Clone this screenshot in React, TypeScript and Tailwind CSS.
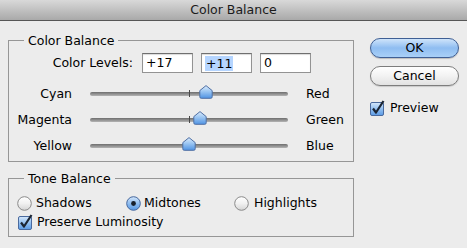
import React from 'react';

const font = { fontFamily: '"DejaVu Sans", "Liberation Sans", sans-serif' };

const sliders = [
  { left: 'Cyan', right: 'Red', value: 17 },
  { left: 'Magenta', right: 'Green', value: 11 },
  { left: 'Yellow', right: 'Blue', value: 0 },
];

const Thumb = () => (
  <svg width="14" height="14" viewBox="0 0 14 14">
    <defs>
      <linearGradient id="thumbFill" x1="0" y1="0" x2="0" y2="1">
        <stop offset="0" stopColor="#dcebfb" />
        <stop offset="0.45" stopColor="#9cc6f2" />
        <stop offset="1" stopColor="#4f93e3" />
      </linearGradient>
    </defs>
    <path
      d="M7 0.6 L13.2 5.6 L13.2 11.8 Q13.2 13.3 11.8 13.3 L2.2 13.3 Q0.8 13.3 0.8 11.8 L0.8 5.6 Z"
      fill="url(#thumbFill)"
      stroke="#4f6fa3"
      strokeWidth="1"
    />
  </svg>
);

const Radio = ({ checked }: { checked?: boolean }) => (
  <svg width="15" height="15" viewBox="0 0 15 15">
    <defs>
      <linearGradient id="radioOff" x1="0" y1="0" x2="0" y2="1">
        <stop offset="0" stopColor="#ffffff" />
        <stop offset="0.5" stopColor="#f1f1f1" />
        <stop offset="1" stopColor="#d4d4d4" />
      </linearGradient>
      <linearGradient id="radioOn" x1="0" y1="0" x2="0" y2="1">
        <stop offset="0" stopColor="#d4e6fa" />
        <stop offset="0.5" stopColor="#8fbdf0" />
        <stop offset="1" stopColor="#5597e4" />
      </linearGradient>
    </defs>
    <circle
      cx="7.5"
      cy="7.5"
      r="6.8"
      fill={checked ? 'url(#radioOn)' : 'url(#radioOff)'}
      stroke={checked ? '#45679d' : '#8a8a8a'}
      strokeWidth="1"
    />
    {checked && <circle cx="7.5" cy="7.5" r="2.4" fill="#17202c" />}
  </svg>
);

const Check = () => (
  <svg width="15" height="15" viewBox="0 0 15 15" className="overflow-visible">
    <defs>
      <linearGradient id="checkFill" x1="0" y1="0" x2="0" y2="1">
        <stop offset="0" stopColor="#d6e8fb" />
        <stop offset="0.5" stopColor="#93c0f1" />
        <stop offset="1" stopColor="#5a9ae5" />
      </linearGradient>
    </defs>
    <rect x="0.5" y="1.5" width="13" height="13" rx="1.5" fill="url(#checkFill)" stroke="#4a6a9e" />
    <path d="M3 7.5 L6 11.5 L13.5 0" fill="none" stroke="#1b2534" strokeWidth="2.2" strokeLinejoin="round" />
  </svg>
);

const LevelInput = ({ value, selected }: { value: string; selected?: boolean }) => (
  <div className="w-[51px] h-[20px] bg-white border border-[#939393] border-t-[#6f6f6f] shadow-[inset_0_1px_1px_rgba(0,0,0,0.15)] flex items-center pl-[3px] text-black">
    {selected ? <span className="bg-[#b5d5ff] px-[1px] leading-[15px]">{value}</span> : <span>{value}</span>}
  </div>
);

const SliderRow = ({ left, right, value }: { left: string; right: string; value: number }) => {
  const pos = 99 + (value / 100) * 99;
  return (
    <div className="flex items-center h-[26px]">
      <div className="w-[63px] text-right">{left}</div>
      <div className="relative ml-[18px] w-[198px] h-[26px] flex items-center">
        <div className="w-full h-[4px] rounded-full bg-linear-to-b from-[#6e6e6e] to-[#b4b4b4]" />
        <div className="absolute left-[99px] top-[9px] w-[1px] h-[7px] bg-[#4a4a4a]" />
        <div className="absolute top-[4px]" style={{ left: pos - 7 }}>
          <Thumb />
        </div>
      </div>
      <div className="ml-[18px]">{right}</div>
    </div>
  );
};

export default function App() {
  return (
    <div className="w-[467px] h-[248px] bg-[#ececec] text-[12.5px] text-black overflow-hidden" style={font}>
      <div className="h-[21px] bg-linear-to-b from-[#d9d9d9] to-[#a9a9a9] border-b border-[#565656] flex items-center justify-center text-[#1a1a1a]">
        Color Balance
      </div>

      <div className="flex">
        <div className="ml-[8px] w-[346px]">
          <fieldset className="mt-[12px] border border-[#969696] pb-[2px]">
            <legend className="ml-[15px] px-[4px] leading-[15px]">Color Balance</legend>
            <div className="flex items-center pt-[5px]">
              <div className="w-[124px] text-right">Color Levels:</div>
              <div className="flex ml-[9px] gap-[8px]">
                <LevelInput value="+17" />
                <LevelInput value="+11" selected />
                <LevelInput value="0" />
              </div>
            </div>
            <div className="mt-[8px]">
              {sliders.map((s) => (
                <SliderRow key={s.left} {...s} />
              ))}
            </div>
          </fieldset>

          <fieldset className="mt-[9px] border border-[#969696] pb-[5px]">
            <legend className="ml-[15px] px-[4px] leading-[15px]">Tone Balance</legend>
            <div className="flex items-center h-[20px] mt-[7px] pl-[8px]">
              <div className="flex items-center gap-[4px] w-[109px]">
                <Radio />
                <span>Shadows</span>
              </div>
              <div className="flex items-center gap-[3px] w-[108px]">
                <Radio checked />
                <span>Midtones</span>
              </div>
              <div className="flex items-center gap-[5px]">
                <Radio />
                <span>Highlights</span>
              </div>
            </div>
            <div className="flex items-center h-[18px] pl-[9px] gap-[4px]">
              <Check />
              <span>Preserve Luminosity</span>
            </div>
          </fieldset>
        </div>

        <div className="ml-[16px] mt-[17px] w-[89px] flex flex-col">
          <button className="h-[20px] rounded-full border border-[#3f5f94] bg-linear-to-b from-[#cfe4fa] via-[#8fbdf1] to-[#a9d0f7] shadow-[0_1px_1px_rgba(0,0,0,0.2)] text-black">
            OK
          </button>
          <button className="mt-[8px] h-[20px] rounded-full border border-[#7d7d7d] bg-linear-to-b from-[#ffffff] via-[#f2f2f2] to-[#e2e2e2] shadow-[0_1px_1px_rgba(0,0,0,0.15)] text-black">
            Cancel
          </button>
          <div className="mt-[14px] h-[16px] flex items-center gap-[5px]">
            <Check />
            <span>Preview</span>
          </div>
        </div>
      </div>
    </div>
  );
}
